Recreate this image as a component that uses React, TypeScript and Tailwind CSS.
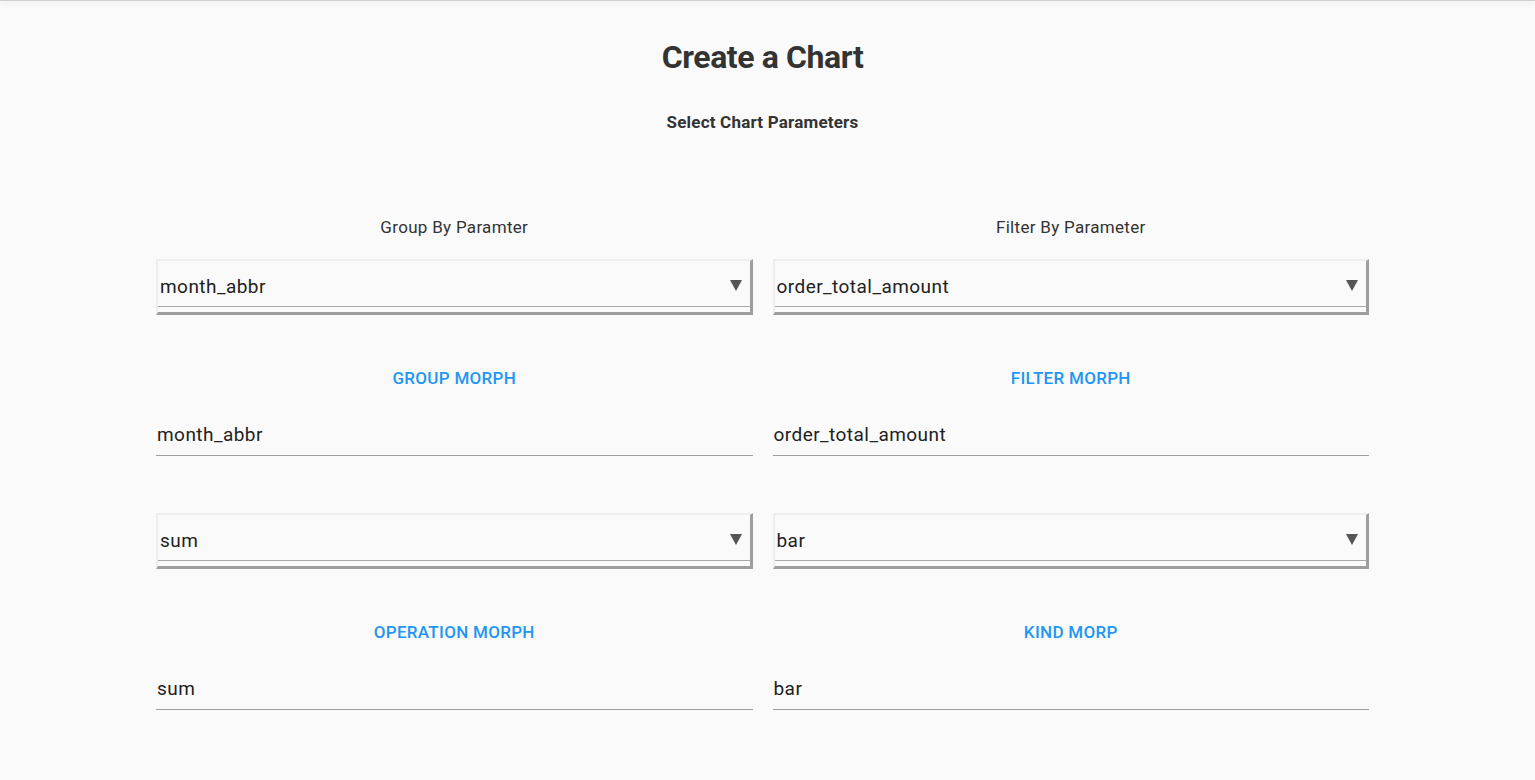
import React from 'react';

const FONT = { fontFamily: 'Roboto, "Noto Sans", sans-serif' };

function SelectBox({ value }: { value: string }) {
  return (
    <div className="border-t-2 border-l-2 border-r-[3px] border-b-[3px] border-t-[#eeeeee] border-l-[#eeeeee] border-r-[#9e9e9e] border-b-[#9e9e9e] pb-[5px]">
      <div className="h-[46px] flex items-center justify-between border-b border-[#a8a8a8] pl-[2px] pr-[8px]">
        <span className="pt-[8px] text-[19px] tracking-[0.45px] text-[#212121]">{value}</span>
        <svg width="12" height="11" viewBox="0 0 12 11" className="mt-[3px]">
          <polygon points="0,0 12,0 6,11" fill="#555555" />
        </svg>
      </div>
    </div>
  );
}

function TextField({ value }: { value: string }) {
  return (
    <div className="h-[42px] flex items-center border-b border-[#9e9e9e] pl-[1px] pt-[1px]">
      <span className="text-[19px] tracking-[0.45px] text-[#212121]">{value}</span>
    </div>
  );
}

function Column({ label, select, morph, input }: { label: string; select: string; morph: string; input: string }) {
  return (
    <div className="flex flex-col">
      <div className="h-[24px] leading-[24px] text-center text-[17px] tracking-[0.3px] text-[#333333]">{label}</div>
      <div className="mt-[20px]">
        <SelectBox value={select} />
      </div>
      <div className="mt-[51px] h-[24px] leading-[24px] text-center text-[17px] tracking-[0.3px] font-medium text-[#2196f3] uppercase">{morph}</div>
      <div className="mt-[24px]">
        <TextField value={input} />
      </div>
    </div>
  );
}

export default function App() {
  return (
    <div className="min-h-screen bg-[#fafafa]" style={FONT}>
      {/* top bar shadow */}
      <div className="h-px bg-[#d0d0d0] shadow-[0_1px_6px_rgba(0,0,0,0.22)]" />

      <div className="w-[1213px] ml-[156px]">
        <h1 className="mt-[36px] h-[40px] leading-[40px] text-center text-[32px] tracking-[-0.4px] font-bold text-[#333333]">Create a Chart</h1>
        <h2 className="mt-[33px] h-[24px] leading-[24px] text-center text-[17px] tracking-[0.2px] font-bold text-[#333333]">Select Chart Parameters</h2>

        <div className="mt-[81px] grid grid-cols-2 gap-x-[20px]">
          <Column label="Group By Paramter" select="month_abbr" morph="Group Morph" input="month_abbr" />
          <Column label="Filter By Parameter" select="order_total_amount" morph="Filter Morph" input="order_total_amount" />
        </div>

        <div className="mt-[13px] grid grid-cols-2 gap-x-[20px]">
          <Column label="" select="sum" morph="Operation Morph" input="sum" />
          <Column label="" select="bar" morph="Kind Morp" input="bar" />
        </div>
      </div>
    </div>
  );
}
